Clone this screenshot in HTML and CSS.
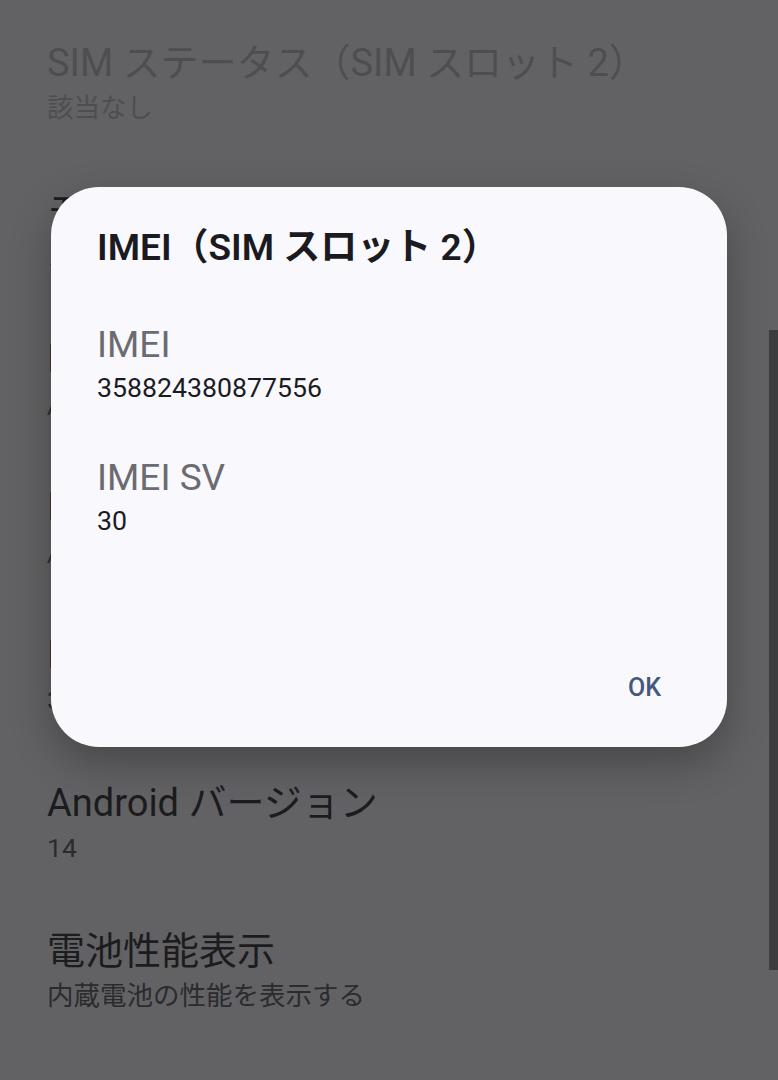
FILE: index.html
```html
<!DOCTYPE html>
<html lang="ja">
<head>
    <meta charset="utf-8">
    <title>端末情報</title>
    <link rel="stylesheet" href="styles.css">
</head>
<body>
    <div class="list">
        <div class="item disabled">
            <div class="item-title">SIM ステータス（SIM スロット 2）</div>
            <div class="item-sub">該当なし</div>
        </div>
        <div class="item">
            <div class="item-title">モデル</div>
            <div class="item-sub">メーカー情報</div>
        </div>
        <div class="item">
            <div class="item-title">IMEI（SIM スロット 1）</div>
            <div class="item-sub">/358824380877549</div>
        </div>
        <div class="item">
            <div class="item-title">IMEI（SIM スロット 2）</div>
            <div class="item-sub">/358824380877556</div>
        </div>
        <div class="item">
            <div class="item-title">IP アドレス</div>
            <div class="item-sub">3</div>
        </div>
        <div class="item">
            <div class="item-title">Android バージョン</div>
            <div class="item-sub">14</div>
        </div>
        <div class="item">
            <div class="item-title">電池性能表示</div>
            <div class="item-sub">内蔵電池の性能を表示する</div>
        </div>
    </div>

    <div class="scrollbar"></div>

    <div class="dialog">
        <div class="dialog-title">IMEI（SIM スロット 2）</div>
        <div class="field">
            <div class="field-label">IMEI</div>
            <div class="field-value">358824380877556</div>
        </div>
        <div class="field">
            <div class="field-label">IMEI SV</div>
            <div class="field-value">30</div>
        </div>
        <div class="actions">
            <button class="btn">OK</button>
        </div>
    </div>
</body>
</html>
```

FILE: styles.css
```css
body {
    margin: 0;
    background-color: #626264;
    font-family: Roboto, "Noto Sans CJK JP", sans-serif;
    height: 1080px;
    overflow: hidden;
}
.list {
    padding-left: 47px;
}
.item {
    height: 148px;
    box-sizing: border-box;
    padding: 38px 0 20px;
}
.item-title {
    font-size: 38px;
    line-height: 50px;
    color: #1c1c1e;
    white-space: nowrap;
}
.item-sub {
    font-size: 26.5px;
    line-height: 40px;
    color: #2b2b2d;
    white-space: nowrap;
}
.item.disabled .item-title,
.item.disabled .item-sub {
    color: #4e4e51;
}
.scrollbar {
    position: absolute;
    right: 0;
    top: 330px;
    width: 9px;
    height: 640px;
    background-color: #3d3d3f;
}
.dialog {
    position: absolute;
    left: 51px;
    top: 187px;
    width: 676px;
    height: 560px;
    box-sizing: border-box;
    padding: 38px 46px 34px 46px;
    background-color: #f8f8fd;
    border-radius: 48px;
    box-shadow: 0 16px 40px rgba(0,0,0,0.28);
    display: flex;
    flex-direction: column;
}
.dialog-title {
    font-size: 37px;
    line-height: 46px;
    font-weight: 600;
    color: #1b1b1f;
    margin-bottom: 51px;
    white-space: nowrap;
}
.field {
    margin-bottom: 47px;
}
.field-label {
    font-size: 37px;
    line-height: 46px;
    color: #6b6b70;
}
.field-value {
    font-size: 26.7px;
    line-height: 40px;
    color: #1b1b1f;
}
.actions {
    margin-top: auto;
    display: flex;
    justify-content: flex-end;
}
.btn {
    background: none;
    border: none;
    padding: 10px 20px;
    font-family: Roboto, "Noto Sans CJK JP", sans-serif;
    font-size: 25px;
    line-height: 30px;
    font-weight: 500;
    color: #44597b;
    cursor: pointer;
}
```
